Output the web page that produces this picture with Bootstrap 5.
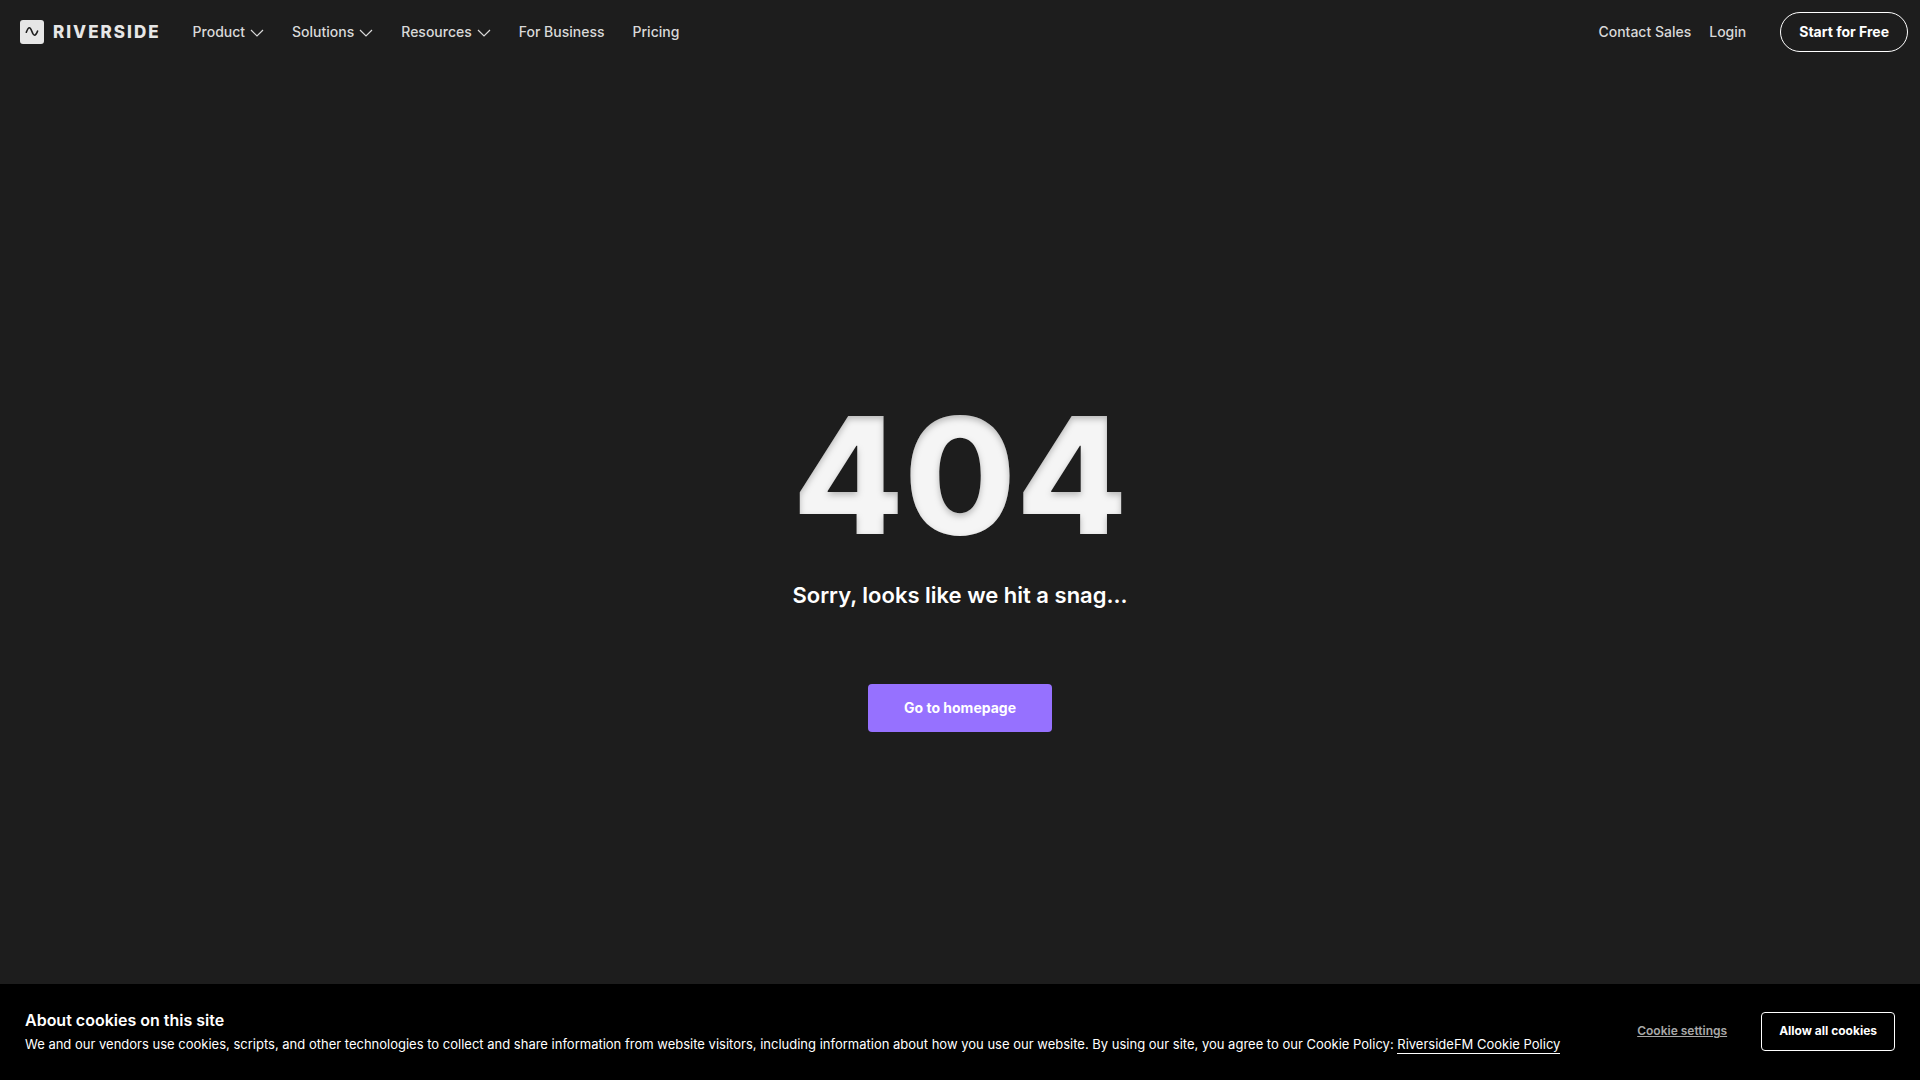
<!DOCTYPE html>
<html lang="en">
<head>
<meta charset="utf-8">
<meta name="viewport" content="width=device-width, initial-scale=1">
<title>Riverside – Page not found</title>
<link href="https://cdn.jsdelivr.net/npm/bootstrap@5.3.0/dist/css/bootstrap.min.css" rel="stylesheet">
<style>
body { background: #1d1d1d; color: #fff; font-family: Inter, "Liberation Sans", sans-serif; }
.site-nav { padding: 12px 12px 12px 20px; font-size: 14px; line-height: 20px; font-weight: 500; }
.site-nav .navbar-brand { gap: 9px; margin-right: 32px; padding: 0; color: #e6e6e6; }
.brand-word { font-size: 17px; line-height: 24px; font-weight: 800; letter-spacing: 2px; }
.main-links { gap: 28px; }
.site-nav .navbar-nav .nav-link { padding: 0; color: #d9d9d9; }
.site-nav .navbar-nav .nav-link:hover { color: #fff; }
.chevron { width: 14px; height: 8px; margin-left: 5px; }
.side-links { gap: 18px; margin-right: 34px; }
.btn-start { height: 40px; padding: 0 18px; border: 1px solid #fff; border-radius: 20px; color: #fff; font-size: 14px; line-height: 20px; font-weight: 700; }
.error-code { font-size: 162px; line-height: 160px; font-weight: 800; color: #f5f5f5; filter: url(#inner-shade); margin-bottom: 24px; }
.error-text { font-size: 22px; line-height: 32px; font-weight: 600; margin-bottom: 73px; }
.btn-home { height: 48px; padding: 0 36px; line-height: 48px; border: 0; border-radius: 4px; background: #9671ff; color: #fff; font-size: 14px; font-weight: 700; }
.btn-home:hover, .btn-start:hover, .btn-allow:hover { background: #fff; color: #1d1d1d; }
.error-page { padding-bottom: 18px; }
.cookie-bar { min-height: 96px; padding: 23px 25px 25px; background: #000; gap: 24px; }
.cookie-title { font-size: 16px; line-height: 24px; font-weight: 600; margin: 0; }
.cookie-copy { font-size: 13px; line-height: 20px; margin: 2px 0 0; }
.cookie-copy a { color: #fff; text-decoration: none; border-bottom: 1px solid #fff; padding-bottom: 1px; }
.cookie-actions { gap: 34px; }
.btn-settings { padding: 0; border: 0; color: #a8a8a8; font-size: 12px; font-weight: 600; text-decoration: underline; }
.btn-allow { height: 39px; padding: 0 17px; border: 1px solid #fff; border-radius: 4px; color: #fff; font-size: 12px; font-weight: 700; }
</style>
<script src="https://cdn.jsdelivr.net/npm/bootstrap@5.3.0/dist/js/bootstrap.bundle.min.js"></script>
</head>
<body class="min-vh-100 d-flex flex-column">
<svg class="position-absolute" width="0" height="0" aria-hidden="true">
  <filter id="inner-shade" color-interpolation-filters="sRGB">
    <feGaussianBlur in="SourceAlpha" stdDeviation="3" result="blur"/>
    <feOffset in="blur" dy="3" result="shifted"/>
    <feComposite in="SourceAlpha" in2="shifted" operator="out" result="rim"/>
    <feFlood flood-color="#000" flood-opacity="0.25"/>
    <feComposite in2="rim" operator="in" result="shade"/>
    <feMerge><feMergeNode in="SourceGraphic"/><feMergeNode in="shade"/></feMerge>
  </filter>
</svg>
<header>
  <nav class="site-nav navbar navbar-expand" aria-label="Main">
    <a class="navbar-brand d-flex align-items-center" href="#">
      <svg width="24" height="24" viewBox="0 0 24 24" aria-hidden="true">
        <rect width="24" height="24" rx="3" fill="#e6e6e6"/>
        <path d="M6.3 12.3C7.2 9.8 8.2 7.7 9.4 7.7C11.6 7.7 12.1 15.2 14.5 15.2C15.7 15.2 16.8 13.4 17.6 11" fill="none" stroke="#1d1d1d" stroke-width="1.6" stroke-linecap="round"/>
      </svg>
      <span class="brand-word">RIVERSIDE</span>
    </a>
    <div class="navbar-nav main-links">
      <a class="nav-link" href="#">Product<svg class="chevron" viewBox="0 0 14 8" fill="none" stroke="currentColor" stroke-width="1.2" aria-hidden="true"><path d="M1 1L7 7L13 1"/></svg></a>
      <a class="nav-link" href="#">Solutions<svg class="chevron" viewBox="0 0 14 8" fill="none" stroke="currentColor" stroke-width="1.2" aria-hidden="true"><path d="M1 1L7 7L13 1"/></svg></a>
      <a class="nav-link" href="#">Resources<svg class="chevron" viewBox="0 0 14 8" fill="none" stroke="currentColor" stroke-width="1.2" aria-hidden="true"><path d="M1 1L7 7L13 1"/></svg></a>
      <a class="nav-link" href="#">For Business</a>
      <a class="nav-link" href="#">Pricing</a>
    </div>
    <div class="navbar-nav side-links ms-auto">
      <a class="nav-link" href="#">Contact Sales</a>
      <a class="nav-link" href="#">Login</a>
    </div>
    <button type="button" class="btn btn-start">Start for Free</button>
  </nav>
</header>
<main class="error-page flex-grow-1 d-flex flex-column align-items-center justify-content-center text-center">
  <h1 class="error-code">404</h1>
  <h2 class="error-text">Sorry, looks like we hit a snag...</h2>
  <a class="btn btn-home" href="#">Go to homepage</a>
</main>
<section class="cookie-bar fixed-bottom d-flex align-items-center justify-content-between" aria-label="Cookies">
  <div>
    <h3 class="cookie-title">About cookies on this site</h3>
    <p class="cookie-copy">We and our vendors use cookies, scripts, and other technologies to collect and share information from website visitors, including information about how you use our website. By using our site, you agree to our Cookie Policy: <a href="#">RiversideFM Cookie Policy</a></p>
  </div>
  <div class="cookie-actions d-flex align-items-center flex-shrink-0">
    <button type="button" class="btn btn-settings">Cookie settings</button>
    <button type="button" class="btn btn-allow">Allow all cookies</button>
  </div>
</section>
</body>
</html>
